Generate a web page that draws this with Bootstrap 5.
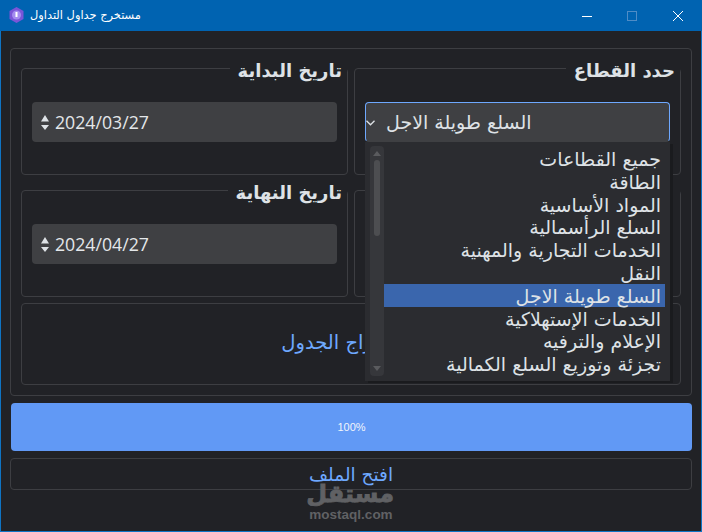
<!DOCTYPE html>
<html lang="ar" dir="rtl" data-bs-theme="dark">
<head>
  <meta charset="UTF-8">
  <title>مستخرج جداول التداول</title>
  <link href="https://cdn.jsdelivr.net/npm/bootstrap@5.3.7/dist/css/bootstrap.min.css" rel="stylesheet">
  <style>
    html, body { height: 532px; overflow: hidden; }
    body { margin: 0; background: #212226; color: #dee2e6; font-family: "DejaVu Sans", sans-serif; }
    .app-win { height: 532px; border: 1px solid #0f74c4; border-top: 0; position: relative; }
    .title-strip { height: 31px; background: #0063b1; margin: 0 -1px; color: #fff; font-size: 11.4px; }
    .title-strip .app-name { margin-left: 6px; }
    .title-strip .app-logo { margin-left: 9px; }
    .win-btns { gap: 36px; padding-right: 19px; }
    .win-btns svg:first-child { margin-right: -1px; }
    .outer-box { margin: 17px 9px 0 9px; height: 348px; padding: 7px 10px 10px; border: 1px solid #3d3e42; border-radius: 4px; }
    .field-row { gap: 6px; }
    .field-box { flex: 1 1 0; min-width: 0; margin: 0; padding: 0 10px 32px; border: 1px solid #3d3e42; border-radius: 4px; }
    .field-box legend { float: none; width: auto; margin: 0 -10px 22px 0; padding: 6px 5px 0 8px; font-size: 18px; line-height: 18px; font-weight: 700; color: #dee2e6; }
    .second-row { margin-top: 3px; }
    .date-field { height: 40px; background: #3f4043; border-radius: 4px; padding: 1px 0 0 9px; gap: 6px; font-family: "Open Sans", sans-serif; font-size: 17.7px; color: #e4e7ea; }
    .combo-field { height: 40px; background: #3f4043; border: 1px solid #6ea8fe; border-bottom-color: #3f4043; border-radius: 4px; padding-top: 1px; font-size: 19px; gap: 11px; color: #dee2e6; }
    .combo-wrap { position: relative; }
    .sector-menu { position: absolute; top: 40px; left: 0; right: 0; height: 239px; background: #2b2c30; box-shadow: 3px 2px 0 #1a1b1e; z-index: 5; padding: 4px 5px 0 5px; }
    .sector-list { flex: 1 1 0; margin: 1px 0 0; padding: 0; list-style: none; font-size: 19px; line-height: 22.8px; }
    .sector-list li { height: 22.8px; padding: 1px 4px 0 0; white-space: nowrap; }
    .sector-list li.picked { background: #3a66ad; }
    .scroll-track { width: 14px; height: 230px; background: #36373b; border-radius: 4px; position: relative; flex: none; }
    .scroll-thumb { position: absolute; top: 14px; left: 4px; width: 6px; height: 76px; border-radius: 3px; background: #4d4e51; }
    .scroll-up, .scroll-down { position: absolute; left: 3px; }
    .scroll-up { top: 5px; }
    .scroll-down { bottom: 5px; }
    .make-box { margin: 6px 0 0; height: 82px; padding: 0 6px 3px 0; border: 1px solid #3d3e42; border-radius: 4px; font-size: 19.6px; color: #6ea8fe; }
    .load-bar { margin: 7px 9px 0 10px; height: 48px; background: #2b2c30; border-radius: 4px; }
    .load-bar .progress-bar { background: #6199f5; color: #f1f5fb; font-size: 11px; font-family: "Liberation Sans", sans-serif; }
    .open-file { margin: 7px 9px 0 9px; height: 32px; border: 1px solid #3d3e42; border-radius: 4px; color: #6ea8fe; font-size: 18.5px; line-height: 30px; padding: 1px 0 0; display: block; width: 682px; }
    .site-mark { position: absolute; left: 307px; top: 482px; width: 86px; color: #606164; text-align: center; font-family: "Liberation Sans", sans-serif; font-weight: 700; line-height: 1; }
    .site-mark .ar { font-family: "DejaVu Sans", sans-serif; font-size: 24px; display: block; height: 26px; -webkit-text-stroke: .8px #606164; }
    .site-mark .en { font-size: 13.5px; display: block; }
  </style>
</head>
<body>
  <div class="app-win">
    <div class="title-strip d-flex align-items-center justify-content-between" dir="ltr">
      <div class="d-flex align-items-center">
        <svg class="app-logo" width="15" height="16" viewBox="0 0 15 16"><path d="M7.5 0 14.5 4v8l-7 4-7-4V4z" fill="#7a55d8"/><circle cx="7.5" cy="8" r="4.5" fill="#a58cf0"/><rect x="6.5" y="5" width="2" height="5" fill="#fff"/></svg>
        <span class="app-name" dir="rtl">مستخرج جداول التداول</span>
      </div>
      <div class="d-flex align-items-center win-btns">
        <svg width="10" height="10" viewBox="0 0 10 10"><path d="M0 5.5h10" stroke="#fff" fill="none"/></svg>
        <svg width="10" height="10" viewBox="0 0 10 10"><rect x=".5" y=".5" width="9" height="9" stroke="#4f8cc6" fill="none"/></svg>
        <svg width="10" height="10" viewBox="0 0 10 10"><path d="M0 0l10 10M10 0 0 10" stroke="#fff" fill="none"/></svg>
      </div>
    </div>

    <div class="outer-box">
      <div class="d-flex field-row">
        <fieldset class="field-box">
          <legend>حدد القطاع</legend>
          <div class="combo-wrap">
            <div class="combo-field d-flex align-items-center" dir="ltr">
              <svg width="9" height="6" viewBox="0 0 9 6"><path d="M.5.8 4.5 4.8 8.5.8" stroke="#dee2e6" stroke-width="1.3" fill="none"/></svg>
              <span dir="rtl">السلع طويلة الاجل</span>
            </div>
            <div class="sector-menu d-flex" dir="ltr">
              <div class="scroll-track">
                <svg class="scroll-up" width="8" height="5" viewBox="0 0 8 5"><path d="M4 0 8 5H0z" fill="#5a5b5e"/></svg>
                <div class="scroll-thumb"></div>
                <svg class="scroll-down" width="8" height="5" viewBox="0 0 8 5"><path d="M4 5 8 0H0z" fill="#5a5b5e"/></svg>
              </div>
              <ul class="sector-list" dir="rtl">
                <li>جميع القطاعات</li>
                <li>الطاقة</li>
                <li>المواد الأساسية</li>
                <li>السلع الرأسمالية</li>
                <li>الخدمات التجارية والمهنية</li>
                <li>النقل</li>
                <li class="picked">السلع طويلة الاجل</li>
                <li>الخدمات الإستهلاكية</li>
                <li>الإعلام والترفيه</li>
                <li>تجزئة وتوزيع السلع الكمالية</li>
              </ul>
            </div>
          </div>
        </fieldset>
        <fieldset class="field-box">
          <legend>تاريخ البداية</legend>
          <div class="date-field d-flex align-items-center" dir="ltr">
            <svg width="8" height="16" viewBox="0 0 8 16"><path d="M4 0 8 6.5H0zM4 15 8 10H0z" fill="#dee2e6"/></svg>
            <span>2024/03/27</span>
          </div>
        </fieldset>
      </div>
      <div class="d-flex field-row second-row">
        <fieldset class="field-box">
          <legend>&nbsp;</legend>
          <div class="date-field invisible"></div>
        </fieldset>
        <fieldset class="field-box">
          <legend>تاريخ النهاية</legend>
          <div class="date-field d-flex align-items-center" dir="ltr">
            <svg width="8" height="16" viewBox="0 0 8 16"><path d="M4 0 8 6.5H0zM4 15 8 10H0z" fill="#dee2e6"/></svg>
            <span>2024/04/27</span>
          </div>
        </fieldset>
      </div>
      <div class="make-box d-flex align-items-center justify-content-center">استخراج الجدول</div>
    </div>

    <div class="progress load-bar">
      <div class="progress-bar" style="width: 100%">100%</div>
    </div>
    <button type="button" class="btn open-file">افتح الملف</button>
    <div class="site-mark"><span class="ar">مستقل</span><span class="en">mostaql.com</span></div>
  </div>
  <script src="https://cdn.jsdelivr.net/npm/bootstrap@5.3.7/dist/js/bootstrap.bundle.min.js"></script>
</body>
</html>
